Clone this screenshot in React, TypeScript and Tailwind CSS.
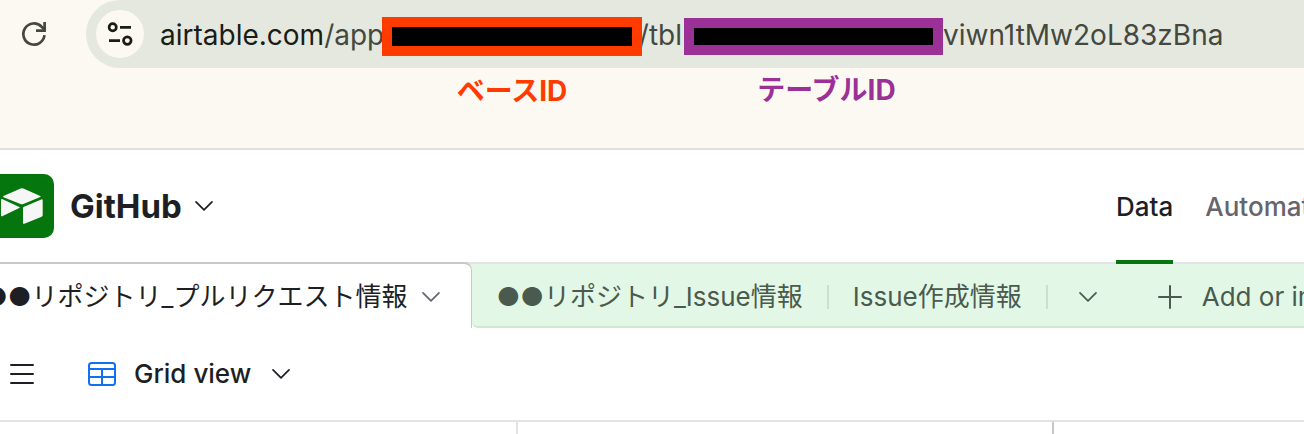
import type { ReactNode } from "react";

function Chevron({ className }: { className: string }) {
  return (
    <svg viewBox="0 0 20 12" fill="none" stroke="currentColor" strokeWidth="1.7" strokeLinecap="round" strokeLinejoin="round" className={`h-3 w-5 shrink-0 ${className}`} aria-hidden="true">
      <path d="M2 1.8 10 9.8l8-8" />
    </svg>
  );
}

function ReloadIcon() {
  return (
    <svg viewBox="0 0 28 28" fill="none" stroke="currentColor" strokeWidth="2.7" className="size-7" aria-hidden="true">
      <path d="M24.5 15.2A10.6 10.6 0 1 1 21.6 6.7L24.5 9.5" />
      <path d="M24.6 2v8.6H16" />
    </svg>
  );
}

function TuneIcon() {
  return (
    <svg viewBox="0 0 28 28" fill="none" stroke="currentColor" strokeWidth="2.7" className="size-7" aria-hidden="true">
      <circle cx="6.7" cy="7.3" r="3.6" />
      <path d="M14 7.3h11M3 20.6h11" />
      <circle cx="21.3" cy="20.6" r="3.8" />
    </svg>
  );
}

function BaseLogo() {
  return (
    <svg viewBox="0 0 44 40" fill="#f6f6f6" className="h-10 w-11" aria-hidden="true">
      <path d="M20.600 2.600q1.400-.6 2.800 0L40.200 9.900q1.200.6 0 1.200L23.400 18q-1.400.5-2.800 0L3.500 11.300q-1-.6 0-1.200Z" />
      <path d="M1 14.300q0-1.700 1.600-1L19.300 20.900q1.200.7 0 1.200L2.200 30.200Q1 30.700 1 29.500Z" />
      <path d="M23 22.200q0-1 1-1.400L41.300 13.500q1.400-.5 1.400.8V29.300q0 1-1 1.400L24.400 37.700q-1.400.5-1.400-.8Z" />
    </svg>
  );
}

function GridIcon() {
  return (
    <svg viewBox="0 0 28 24" fill="none" stroke="#1170ee" strokeWidth="2" className="h-6 w-7" aria-hidden="true">
      <rect x="1" y="1" width="26" height="22" rx="2.5" />
      <path d="M1 7h26M1 15h26M14 7v16" />
    </svg>
  );
}

function Redacted({ label, box, text }: { label: string; box: string; text: string }) {
  return (
    <span className={`relative flex shrink-0 justify-center border-[10px] bg-black ${box}`}>
      <span className={`absolute top-full mt-[29px] text-[28px] leading-8 font-bold ${text}`}>{label}</span>
    </span>
  );
}

function TableTab({ children }: { children: ReactNode }) {
  return (
    <button type="button" className="shrink-0">
      {children}
    </button>
  );
}

export default function App() {
  return (
    <div className="overflow-hidden bg-white font-['Inter','Noto_Sans_CJK_JP',sans-serif] whitespace-nowrap text-[#1d1f25]">
      <header className="flex h-[150px] items-start border-b-2 border-[#e1e2dc] bg-[#fcf8f2]">
        <button type="button" aria-label="Reload" className="mt-5 ml-5 shrink-0 text-[#45483f]">
          <ReloadIcon />
        </button>
        <div className="ml-[38px] flex h-[68px] min-w-0 flex-1 items-center rounded-l-full bg-[#e4e8df] pl-[10px] text-[#45483f]">
          <button type="button" aria-label="Site information" className="flex size-12 shrink-0 items-center justify-center rounded-full bg-[#fcf8f2] text-[#1a1c16]">
            <TuneIcon />
          </button>
          <div className="mt-1 ml-4 flex items-center text-[28px] leading-8">
            <span className="w-[222px] shrink-0 pb-[2px]">
              <span className="text-[#1a1c16]">airtable.com</span>/app
            </span>
            <Redacted label="ベースID" box="h-[39px] w-[260px] border-[#ff3b00]" text="text-[#ff3b00]" />
            <span className="flex w-[42px] shrink-0 justify-end pr-[2px] pb-[2px]">/tbl</span>
            <Redacted label="テーブルID" box="h-[37px] w-[259px] border-[#9b3097] pl-[26px]" text="text-[#9b3097]" />
            <span className="pb-[2px]">viwn1tMw2oL83zBna</span>
          </div>
        </div>
      </header>

      <div className="flex h-[114px] items-stretch border-b-2 border-[#e3e2e6]">
        <div className="-ml-[10px] flex items-center">
          <span className="flex size-16 items-center justify-center rounded-[10px] bg-[#04760d]">
            <BaseLogo />
          </span>
          <button type="button" className="ml-4 flex items-center gap-3">
            <h1 className="text-[33px] leading-10 font-bold">GitHub</h1>
            <Chevron className="" />
          </button>
        </div>
        <nav className="ml-auto flex w-[188px] shrink-0 gap-8 text-[26px] leading-8 font-medium">
          <a href="#data" className="-mb-[2px] flex shrink-0 items-center border-b-4 border-[#04760d] pt-1">
            Data
          </a>
          <a href="#automations" className="flex shrink-0 items-center pt-[2px] text-[#66646c]">
            Automations
          </a>
        </nav>
      </div>

      <div className="flex h-16 items-stretch bg-linear-to-b from-[#e2f7e6] from-50% to-white to-50% text-[26px] leading-8">
        <div className="-mt-[2px] -ml-4 flex shrink-0 items-center gap-[14px] rounded-tr-lg border-t-2 border-r border-t-[#c8c8ca] border-r-[#c3d2c6] bg-white pt-[2px] pr-[30px]">
          <TableTab>●●リポジトリ_プルリクエスト情報</TableTab>
          <Chevron className="text-[#616670]" />
        </div>
        <div className="flex min-w-0 flex-1 items-center rounded-bl-md border-b-2 border-[#cfe8d4] bg-[#e2f7e6] bg-clip-border pt-1 pl-6 text-[#4a5a4e]">
          <TableTab>●●リポジトリ_Issue情報</TableTab>
          <span className="mx-6 h-6 w-[2px] shrink-0 bg-[#cbe0cf]" />
          <TableTab>Issue作成情報</TableTab>
          <span className="mx-6 h-6 w-[2px] shrink-0 bg-[#cbe0cf]" />
          <button type="button" aria-label="All tables" className="ml-[6px] shrink-0">
            <Chevron className="" />
          </button>
          <button type="button" className="ml-[60px] flex shrink-0 items-center gap-5">
            <svg viewBox="0 0 24 24" stroke="currentColor" strokeWidth="2" strokeLinecap="round" className="size-6" aria-hidden="true">
              <path d="M12 1v22M1 12h22" />
            </svg>
            Add or import
          </button>
        </div>
      </div>

      <div className="flex h-[94px] items-center border-b-2 border-[#e3e3e5] pl-[10px] text-[26px] leading-8 font-medium">
        <button type="button" aria-label="Toggle sidebar">
          <svg viewBox="0 0 24 20" stroke="currentColor" strokeWidth="2" strokeLinecap="round" className="h-5 w-6" aria-hidden="true">
            <path d="M1 1h22M1 10h22M1 19h22" />
          </svg>
        </button>
        <button type="button" className="ml-[54px] flex items-center">
          <GridIcon />
          <span className="ml-[18px]">Grid view</span>
          <Chevron className="ml-5" />
        </button>
      </div>
      <div className="flex h-3">
        <div className="w-[518px] shrink-0 border-r-2 border-[#e3e3e5]" />
        <div className="w-[536px] shrink-0 border-r-2 border-[#c8c8cc]" />
      </div>
    </div>
  );
}
